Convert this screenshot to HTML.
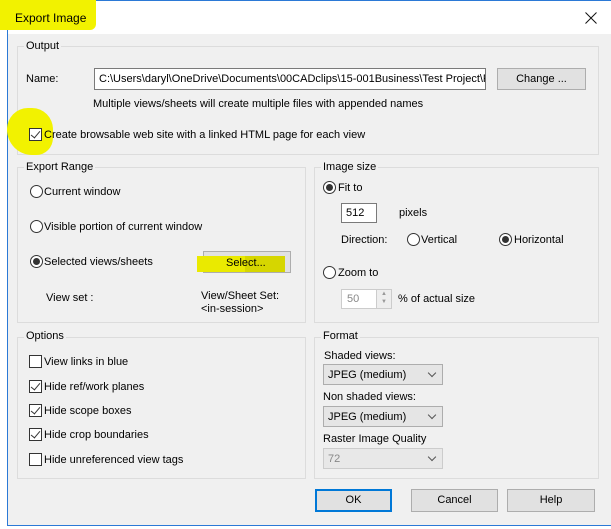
<!DOCTYPE html>
<html><head><style>
*{box-sizing:border-box;margin:0;padding:0}
body{width:611px;height:529px;background:#fff;font-family:"Liberation Sans",sans-serif;font-size:11px;color:#000;position:relative;overflow:hidden}
.a{position:absolute}
.win{left:7px;top:0;width:605px;height:526px;border:1px solid #2b79d6;background:#f0f0f0}
.title{left:8px;top:1px;width:603px;height:33px;background:#fff}
.grp{border:1px solid #dcdcdc}
.lbl{background:#f0f0f0;padding:0 2px;white-space:nowrap}
.tb{background:#fff;border:1px solid #7a7a7a;white-space:nowrap;overflow:hidden;padding:4px 4px}
.btn{background:#e1e1e1;border:1px solid #adadad;text-align:center;line-height:20px}
.rad{width:13px;height:13px;border:1px solid #333;border-radius:50%;background:#fff}
.rad.on::after{content:"";position:absolute;left:2px;top:2px;width:7px;height:7px;border-radius:50%;background:#333}
.cb{width:13px;height:13px;border:1px solid #333;background:#fff}
.cb.on::after{content:"";position:absolute;left:3px;top:0px;width:4px;height:8px;border:solid #333;border-width:0 1.3px 1.3px 0;transform:rotate(40deg)}
.combo{background:#e5e5e5;border:1px solid #adadad;padding:4px 4px;height:21px}
.combo::after{content:"";position:absolute;right:7px;top:5px;width:5px;height:5px;border:solid #555;border-width:0 1px 1px 0;transform:rotate(45deg)}
.t{white-space:nowrap}
</style></head><body>
<div class="a win"></div>
<div class="a title"></div>
<div class="a" style="left:0;top:0;width:96px;height:30px;background:#f2f200;border-radius:0 0 6px 0"></div>
<div class="a t" style="left:15px;top:11px;font-size:12px">Export Image</div>
<svg class="a" style="left:585px;top:12px" width="12" height="12"><path d="M0.5 0.5L11.5 11.5M11.5 0.5L0.5 11.5" stroke="#111" stroke-width="1"/></svg>

<div class="a grp" style="left:17px;top:46px;width:582px;height:109px"></div>
<div class="a lbl" style="left:24px;top:40px">Output</div>
<div class="a t" style="left:26px;top:73px">Name:</div>
<div class="a tb" style="left:94px;top:68px;width:392px;height:22px">C:\Users\daryl\OneDrive\Documents\00CADclips\15-001Business\Test Project\P</div>
<div class="a btn" style="left:497px;top:68px;width:89px;height:22px">Change ...</div>
<div class="a t" style="left:93px;top:98px">Multiple views/sheets will create multiple files with appended names</div>
<div class="a" style="left:7px;top:108px;width:46px;height:47px;background:#f2f200;border-radius:50% 50% 40% 60%"></div>
<div class="a cb on" style="left:29px;top:128px"></div>
<div class="a t" style="left:44px;top:129px">Create browsable web site with a linked HTML page for each view</div>

<div class="a grp" style="left:17px;top:167px;width:289px;height:156px"></div>
<div class="a lbl" style="left:24px;top:161px">Export Range</div>
<div class="a rad" style="left:30px;top:185px"></div><div class="a t" style="left:44px;top:186px">Current window</div>
<div class="a rad" style="left:30px;top:220px"></div><div class="a t" style="left:44px;top:221px">Visible portion of current window</div>
<div class="a rad on" style="left:30px;top:255px"></div><div class="a t" style="left:44px;top:256px">Selected views/sheets</div>
<div class="a btn" style="left:203px;top:251px;width:88px;height:22px"></div>
<div class="a" style="left:197px;top:256px;width:48px;height:16px;background:#eaea00"></div>
<div class="a" style="left:245px;top:256px;width:40px;height:16px;background:#d6d600"></div>
<div class="a t" style="left:226px;top:257px">Select...</div>
<div class="a t" style="left:46px;top:292px">View set :</div>
<div class="a t" style="left:201px;top:290px;line-height:13px">View/Sheet Set:<br>&lt;in-session&gt;</div>

<div class="a grp" style="left:314px;top:167px;width:285px;height:156px"></div>
<div class="a lbl" style="left:321px;top:161px">Image size</div>
<div class="a rad on" style="left:323px;top:181px"></div><div class="a t" style="left:338px;top:182px">Fit to</div>
<div class="a tb" style="left:341px;top:203px;width:36px;height:20px;padding:3px 4px">512</div>
<div class="a t" style="left:399px;top:207px">pixels</div>
<div class="a t" style="left:341px;top:234px">Direction:</div>
<div class="a rad" style="left:407px;top:233px"></div><div class="a t" style="left:421px;top:234px">Vertical</div>
<div class="a rad on" style="left:499px;top:233px"></div><div class="a t" style="left:514px;top:234px">Horizontal</div>
<div class="a rad" style="left:323px;top:266px"></div><div class="a t" style="left:338px;top:267px">Zoom to</div>
<div class="a tb" style="left:341px;top:289px;width:51px;height:20px;padding:3px 5px;color:#888;border-color:#ccc">50</div>
<div class="a" style="left:376px;top:290px;width:15px;height:18px;background:#eee;border-left:1px solid #ccc;font-size:6px;color:#999;text-align:center;line-height:8px">▲<br>▼</div>
<div class="a t" style="left:398px;top:293px">% of actual size</div>

<div class="a grp" style="left:17px;top:337px;width:289px;height:142px"></div>
<div class="a lbl" style="left:24px;top:330px">Options</div>
<div class="a cb" style="left:29px;top:355px"></div><div class="a t" style="left:44px;top:356px">View links in blue</div>
<div class="a cb on" style="left:29px;top:380px"></div><div class="a t" style="left:44px;top:381px">Hide ref/work planes</div>
<div class="a cb on" style="left:29px;top:404px"></div><div class="a t" style="left:44px;top:405px">Hide scope boxes</div>
<div class="a cb on" style="left:29px;top:428px"></div><div class="a t" style="left:44px;top:429px">Hide crop boundaries</div>
<div class="a cb" style="left:29px;top:453px"></div><div class="a t" style="left:44px;top:454px">Hide unreferenced view tags</div>

<div class="a grp" style="left:314px;top:337px;width:285px;height:142px"></div>
<div class="a lbl" style="left:321px;top:330px">Format</div>
<div class="a t" style="left:324px;top:350px">Shaded views:</div>
<div class="a combo" style="left:323px;top:364px;width:120px">JPEG (medium)</div>
<div class="a t" style="left:323px;top:391px">Non shaded views:</div>
<div class="a combo" style="left:323px;top:406px;width:120px">JPEG (medium)</div>
<div class="a t" style="left:323px;top:433px">Raster Image Quality</div>
<div class="a combo" style="left:323px;top:448px;width:120px;color:#888;border-color:#ccc;background:#e8e8e8">72</div>

<div class="a btn" style="left:315px;top:489px;width:77px;height:23px;border:2px solid #0078d7;line-height:19px">OK</div>
<div class="a btn" style="left:411px;top:489px;width:87px;height:23px">Cancel</div>
<div class="a btn" style="left:507px;top:489px;width:88px;height:23px">Help</div>
</body></html>
